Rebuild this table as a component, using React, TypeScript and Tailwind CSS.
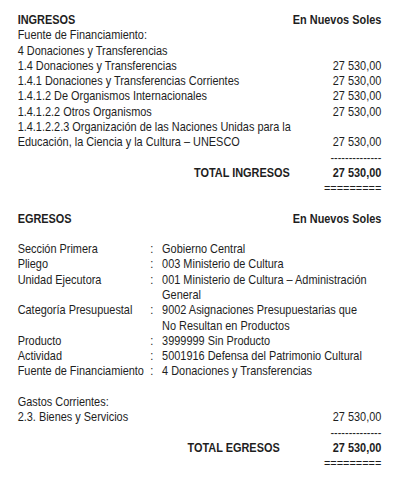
const amount = "27 530,00";

const ingresos = [
  { label: "Fuente de Financiamiento:" },
  { label: "4 Donaciones y Transferencias" },
  { label: "1.4 Donaciones y Transferencias", value: amount },
  { label: "1.4.1 Donaciones y Transferencias Corrientes", value: amount },
  { label: "1.4.1.2 De Organismos Internacionales", value: amount },
  { label: "1.4.1.2.2 Otros Organismos", value: amount },
  { label: "1.4.1.2.2.3 Organización de las Naciones Unidas para la" },
  { label: "Educación, la Ciencia y la Cultura – UNESCO", value: amount },
];

const egresos: { label: string; value: React.ReactNode }[] = [
  { label: "Sección Primera", value: "Gobierno Central" },
  { label: "Pliego", value: "003 Ministerio de Cultura" },
  {
    label: "Unidad Ejecutora",
    value: (
      <>
        001 Ministerio de Cultura – Administración
        <br />
        General
      </>
    ),
  },
  {
    label: "Categoría Presupuestal",
    value: (
      <>
        9002 Asignaciones Presupuestarias que
        <br />
        No Resultan en Productos
      </>
    ),
  },
  { label: "Producto", value: "3999999 Sin Producto" },
  { label: "Actividad", value: "5001916 Defensa del Patrimonio Cultural" },
  { label: "Fuente de Financiamiento", value: "4 Donaciones y Transferencias" },
];

function Header({ title }: { title: string }) {
  return (
    <div className="flex justify-between font-bold">
      <span>{title}</span>
      <span>En Nuevos Soles</span>
    </div>
  );
}

function Total({ label, gap }: { label: string; gap: string }) {
  return (
    <>
      <div className="text-right">--------------</div>
      <div className="flex justify-end font-bold">
        <span className={gap}>{label}</span>
        <span className="w-[71px] text-right">{amount}</span>
      </div>
      <div className="text-right">=========</div>
    </>
  );
}

export default function App() {
  return (
    <div className="w-[401px] h-[478px] overflow-hidden bg-white">
      {/* text is set narrow, like Arial Narrow */}
      <div
        className="w-[477px] origin-top-left scale-x-[0.84] pl-[21px] pr-[23px] pt-[12px] text-[13px] leading-[15.28px] text-[#1e1e1e] whitespace-nowrap"
        style={{ fontFamily: '"Liberation Sans", Arial, sans-serif' }}
      >
        <Header title="INGRESOS" />
        {ingresos.map((r, i) => (
          <div key={i} className="flex justify-between">
            <span>{r.label}</span>
            {r.value && <span>{r.value}</span>}
          </div>
        ))}
        <Total label="TOTAL INGRESOS" gap="mr-[38px]" />

        <div className="h-[15.28px]" />
        <Header title="EGRESOS" />
        <div className="h-[15.28px]" />

        {egresos.map((r, i) => (
          <div key={i} className="grid grid-cols-[158px_14px_1fr]">
            <span>{r.label}</span>
            <span>:</span>
            <span>{r.value}</span>
          </div>
        ))}

        <div className="h-[15.28px]" />
        <div>Gastos Corrientes:</div>
        <div className="flex justify-between">
          <span>2.3. Bienes y Servicios</span>
          <span>{amount}</span>
        </div>
        <Total label="TOTAL EGRESOS" gap="mr-[50px]" />
      </div>
    </div>
  );
}
